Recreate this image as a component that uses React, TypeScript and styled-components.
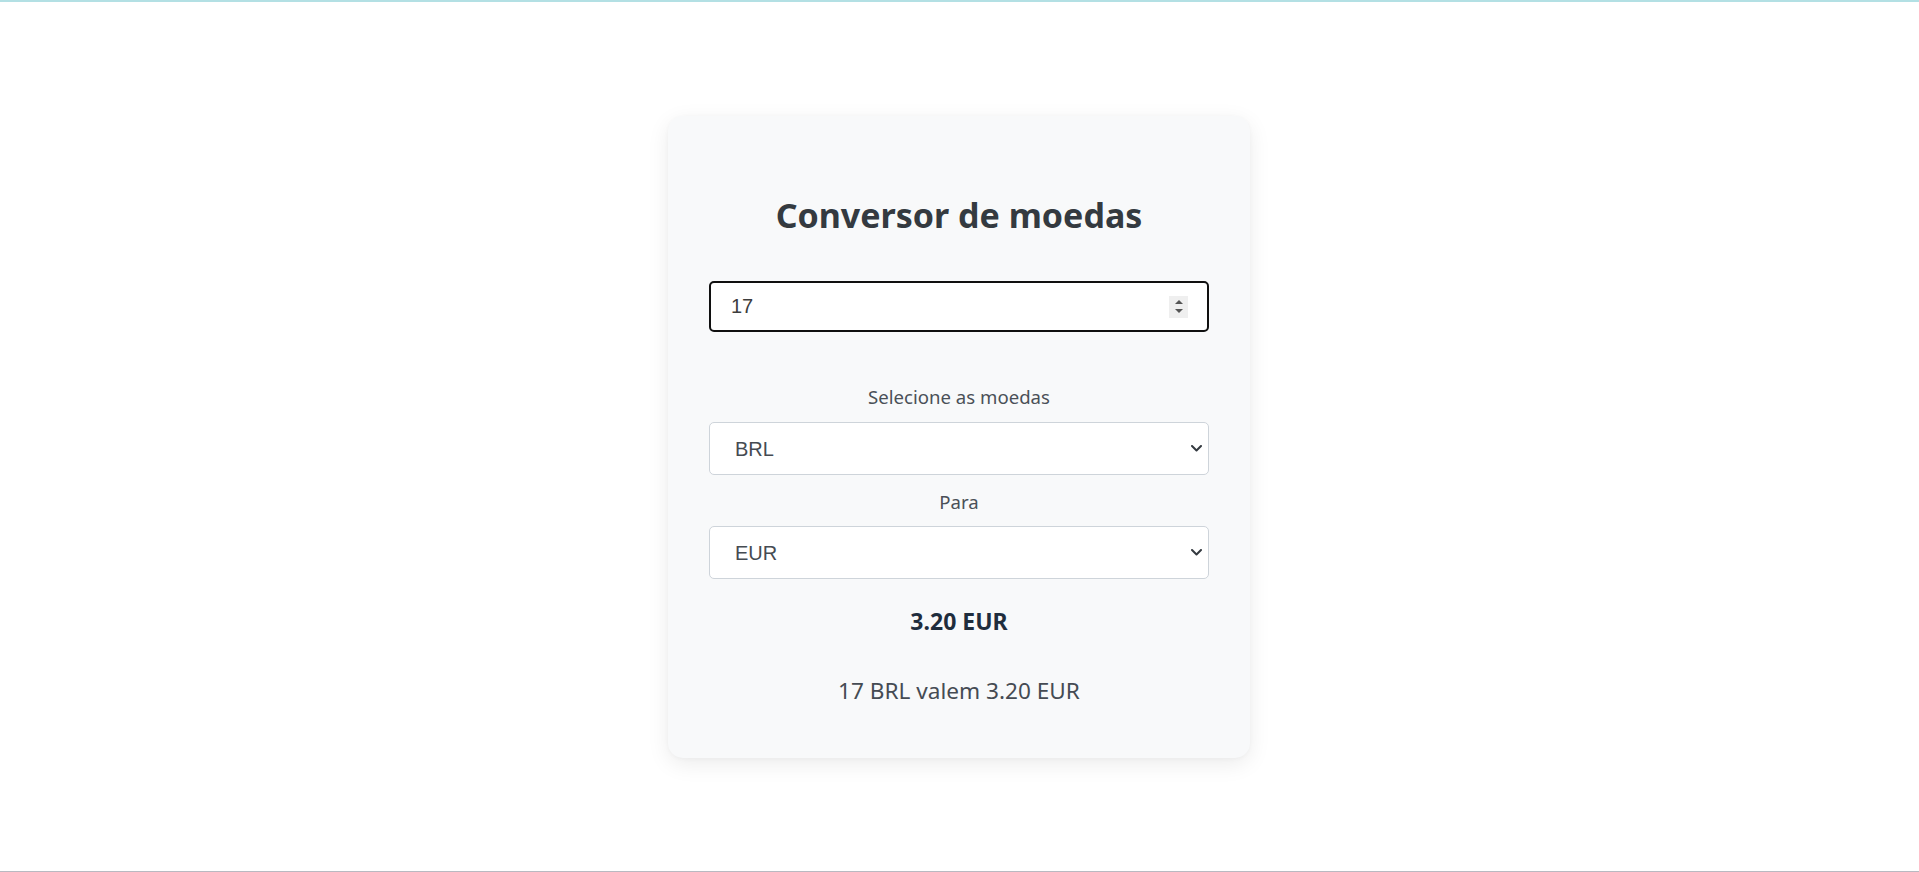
import React, { useState } from "react";
import styled, { createGlobalStyle } from "styled-components";

const Global = createGlobalStyle`
  html, body { margin: 0; padding: 0; background: #ffffff; }
  body { font-family: "Noto Sans", "Open Sans", sans-serif; }
  *, *::before, *::after { box-sizing: border-box; }
`;

const Page = styled.main`
  min-height: 872px;
  border-top: 2px solid #b3e0e4;
  border-bottom: 1px solid #b9b9c1;
  display: flex;
  justify-content: center;
  align-items: flex-start;
  padding: 114px 1px 0 0;
`;

const Card = styled.section`
  width: 582px;
  padding: 76px 41px 51px;
  background: #f8f9fa;
  border-radius: 15px;
  box-shadow: 0 6px 22px rgba(0, 0, 0, 0.08), 0 1px 4px rgba(0, 0, 0, 0.03);
  display: flex;
  flex-direction: column;
  align-items: stretch;
  text-align: center;
`;

const Title = styled.h1`
  margin: 0;
  font-size: 34px;
  line-height: 46px;
  font-weight: 700;
  color: #343a40;
`;

const NumberField = styled.div`
  margin-top: 43px;
  height: 51px;
  display: flex;
  align-items: center;
  border: 2px solid #101010;
  border-radius: 5px;
  background: #ffffff;
  padding: 0 19px 0 20px;
`;

const NumberInput = styled.input`
  flex: 1;
  min-width: 0;
  border: 0;
  outline: none;
  padding: 0;
  background: transparent;
  font-family: "Liberation Sans", Arial, sans-serif;
  font-size: 20px;
  color: #3d3d3d;
`;

const Spinner = styled.div`
  width: 19px;
  height: 22px;
  background: #efefef;
  display: flex;
  flex-direction: column;
  align-items: center;
  justify-content: center;
  gap: 5px;
`;

const Arrow = styled.span<{ $down?: boolean }>`
  width: 0;
  height: 0;
  border-left: 4.5px solid transparent;
  border-right: 4.5px solid transparent;
  ${(p) => (p.$down ? "border-top: 4px solid #555;" : "border-bottom: 4px solid #555;")}
`;

const Label = styled.label<{ $gap: number }>`
  display: block;
  margin-top: ${(p) => p.$gap}px;
  font-size: 18.6px;
  line-height: 24px;
  color: #4a5057;
`;

const SelectBox = styled.div<{ $gap: number }>`
  margin-top: ${(p) => p.$gap}px;
  height: 53px;
  display: flex;
  align-items: center;
  border: 1px solid #ced4da;
  border-radius: 5px;
  background: #ffffff;
  padding: 0 6px 0 0;
`;

const Select = styled.select`
  flex: 1;
  min-width: 0;
  height: 100%;
  appearance: none;
  -webkit-appearance: none;
  border: 0;
  outline: none;
  background: transparent;
  padding: 0 0 0 25px;
  font-family: "Liberation Sans", Arial, sans-serif;
  font-size: 20px;
  color: #454b52;
`;

const Chevron = styled.svg`
  width: 11px;
  height: 7px;
  flex: none;
  pointer-events: none;
`;

const Result = styled.p`
  margin: 27px 0 0;
  font-size: 23px;
  line-height: 30px;
  font-weight: 700;
  color: #1f2d3d;
`;

const Sentence = styled.p`
  margin: 39px 0 0;
  font-size: 22.6px;
  line-height: 32px;
  color: #454b53;
`;

const ChevronIcon = () => (
  <Chevron viewBox="0 0 11 7">
    <path d="M1 1l4.5 4.5L10 1" fill="none" stroke="#343a40" strokeWidth="2" strokeLinecap="round" strokeLinejoin="round" />
  </Chevron>
);

const rates: Record<string, number> = { BRL: 1, EUR: 3.2 / 17, USD: 0.2 };

export default function App() {
  const [amount, setAmount] = useState("17");
  const [from, setFrom] = useState("BRL");
  const [to, setTo] = useState("EUR");
  const value = ((parseFloat(amount) || 0) / rates[from]) * rates[to];
  const formatted = value.toFixed(2);

  return (
    <>
      <Global />
      <Page>
        <Card>
          <Title>Conversor de moedas</Title>
          <NumberField>
            <NumberInput type="text" inputMode="numeric" value={amount} onChange={(e) => setAmount(e.target.value)} />
            <Spinner>
              <Arrow />
              <Arrow $down />
            </Spinner>
          </NumberField>
          <Label $gap={53}>Selecione as moedas</Label>
          <SelectBox $gap={13}>
            <Select value={from} onChange={(e) => setFrom(e.target.value)}>
              <option>BRL</option>
              <option>EUR</option>
              <option>USD</option>
            </Select>
            <ChevronIcon />
          </SelectBox>
          <Label $gap={15}>Para</Label>
          <SelectBox $gap={12}>
            <Select value={to} onChange={(e) => setTo(e.target.value)}>
              <option>EUR</option>
              <option>BRL</option>
              <option>USD</option>
            </Select>
            <ChevronIcon />
          </SelectBox>
          <Result>{formatted} {to}</Result>
          <Sentence>
            {amount} {from} valem {formatted} {to}
          </Sentence>
        </Card>
      </Page>
    </>
  );
}
